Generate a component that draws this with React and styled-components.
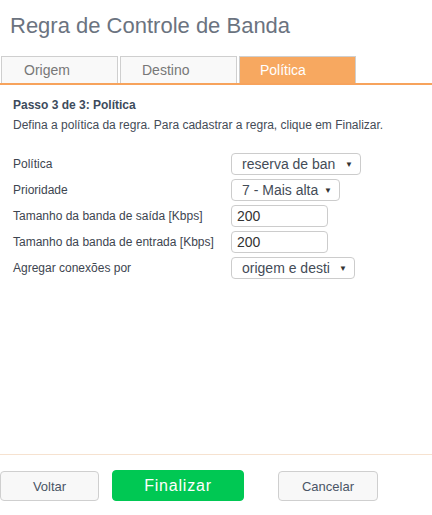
import React from "react";
import styled, { createGlobalStyle } from "styled-components";

const Global = createGlobalStyle`
  html, body { margin: 0; padding: 0; background: #fff; }
  body { font-family: "Liberation Sans", Arial, sans-serif; }
  * { box-sizing: border-box; }
`;

const Page = styled.div`
  width: 432px;
  height: 515px;
  display: flex;
  flex-direction: column;
  overflow: hidden;
`;

const Title = styled.h1`
  margin: 0;
  padding: 13px 0 0 10px;
  height: 56px;
  font-size: 22px;
  font-weight: normal;
  color: #6b7380;
  line-height: 26px;
`;

const TabBar = styled.div`
  display: flex;
  gap: 2px;
  padding-left: 1px;
  border-bottom: 2px solid #f7a35c;
`;

const Tab = styled.div`
  width: 117px;
  height: 27px;
  border: 1px solid #cfcfcf;
  border-bottom: none;
  background: ${(p) => (p.$active ? "#f7a860" : "#f9f9f9")};
  color: ${(p) => (p.$active ? "#fff" : "#777")};
  font-size: 14px;
  line-height: 27px;
  padding-left: ${(p) => p.$pad}px;
`;

const Main = styled.div`
  flex: 1;
  padding: 12px 0 0 13px;
`;

const StepTitle = styled.div`
  font-size: 12px;
  font-weight: bold;
  color: #3d4b5c;
  line-height: 16px;
`;

const StepText = styled.div`
  font-size: 12px;
  color: #444c57;
  line-height: 16px;
  margin-top: 4px;
`;

const Form = styled.div`
  margin-top: 20px;
  display: flex;
  flex-direction: column;
  gap: 4px;
`;

const Row = styled.div`
  display: grid;
  grid-template-columns: 218px auto;
  align-items: center;
  height: 22px;
`;

const Label = styled.div`
  font-size: 12px;
  color: #3d4550;
`;

const Select = styled.div`
  width: ${(p) => p.$w}px;
  height: 22px;
  border: 1px solid #cccccc;
  border-radius: 4px;
  background: #fff;
  display: flex;
  align-items: center;
  justify-content: space-between;
  padding: 0 7px 0 10px;
  font-size: 14px;
  color: #444c57;
  white-space: nowrap;
`;

const Arrow = styled.span`
  font-size: 8px;
  color: #333;
`;

const Input = styled.div`
  width: 97px;
  height: 22px;
  border: 1px solid #cccccc;
  border-radius: 4px;
  padding: 0 5px;
  font-size: 14px;
  line-height: 20px;
  color: #333;
`;

const Footer = styled.div`
  border-top: 1px solid #f6e2d0;
  height: 61px;
  display: flex;
  align-items: flex-start;
  padding-top: 15px;
`;

const Button = styled.div`
  width: ${(p) => p.$w}px;
  height: ${(p) => (p.$primary ? 31 : 30)}px;
  margin-left: ${(p) => p.$ml}px;
  margin-top: ${(p) => (p.$primary ? 0 : 1)}px;
  border-radius: 4px;
  border: 1px solid ${(p) => (p.$primary ? "#00c853" : "#cfcfcf")};
  background: ${(p) => (p.$primary ? "#00c853" : "#f8f8f8")};
  color: ${(p) => (p.$primary ? "#fff" : "#4a5566")};
  font-size: ${(p) => (p.$primary ? 16 : 13)}px;
  letter-spacing: ${(p) => (p.$primary ? 0.8 : 0)}px;
  display: flex;
  align-items: center;
  justify-content: center;
`;

function FakeSelect({ w, children }) {
  return (
    <Select $w={w}>
      <span>{children}</span>
      <Arrow>▼</Arrow>
    </Select>
  );
}

export default function App() {
  return (
    <Page>
      <Global />
      <Title>Regra de Controle de Banda</Title>
      <TabBar>
        <Tab $pad={22}>Origem</Tab>
        <Tab $pad={21}>Destino</Tab>
        <Tab $active $pad={20}>Política</Tab>
      </TabBar>
      <Main>
        <StepTitle>Passo 3 de 3: Política</StepTitle>
        <StepText>Defina a política da regra. Para cadastrar a regra, clique em Finalizar.</StepText>
        <Form>
          <Row>
            <Label>Política</Label>
            <FakeSelect w={130}>reserva de ban</FakeSelect>
          </Row>
          <Row>
            <Label>Prioridade</Label>
            <FakeSelect w={109}>7 - Mais alta</FakeSelect>
          </Row>
          <Row>
            <Label>Tamanho da banda de saída [Kbps]</Label>
            <Input>200</Input>
          </Row>
          <Row>
            <Label>Tamanho da banda de entrada [Kbps]</Label>
            <Input>200</Input>
          </Row>
          <Row>
            <Label>Agregar conexões por</Label>
            <FakeSelect w={124}>origem e desti</FakeSelect>
          </Row>
        </Form>
      </Main>
      <Footer>
        <Button $w={99} $ml={0}>Voltar</Button>
        <Button $primary $w={132} $ml={13}>Finalizar</Button>
        <Button $w={100} $ml={34}>Cancelar</Button>
      </Footer>
    </Page>
  );
}
